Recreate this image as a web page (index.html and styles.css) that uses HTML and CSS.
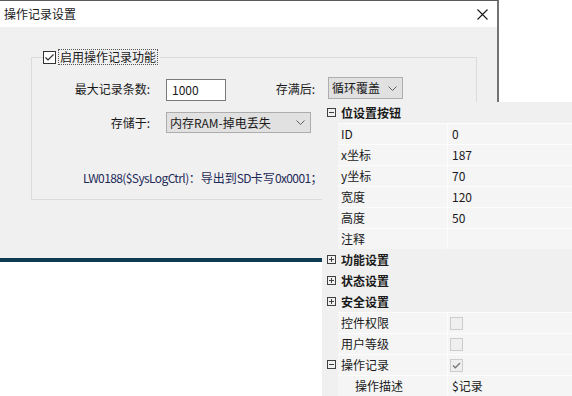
FILE: index.html
```html
<!DOCTYPE html>
<html lang="zh-CN">
<head>
    <meta charset="UTF-8">
    <title>操作记录设置</title>
    <link rel="stylesheet" href="styles.css">
</head>
<body>
<div id="screen">
    <div class="dialog">
        <div class="dialog-title">
            <span>操作记录设置</span>
            <svg class="close" width="11" height="11" viewBox="0 0 11 11"><path d="M0.5 0.5L10.5 10.5M10.5 0.5L0.5 10.5" stroke="#1a1a1a" stroke-width="1.1" fill="none"/></svg>
        </div>
        <div class="dialog-body">
            <div class="group">
                <div class="legend">
                    <span class="check"><svg width="11" height="11" viewBox="0 0 11 11"><path d="M1.5 5.5L4 8L9.5 2.5" stroke="#333" stroke-width="1.2" fill="none"/></svg></span>
                    <span class="legend-text">启用操作记录功能</span>
                </div>
                <div class="row row-top">
                    <span class="lbl">最大记录条数:</span>
                    <div class="input">1000</div>
                    <span class="lbl lbl-full">存满后:</span>
                    <div class="select sel-mode"><span>循环覆盖</span><svg class="chev" width="9" height="5" viewBox="0 0 9 5"><polyline points="0.5,0.5 4.5,4.5 8.5,0.5" stroke="#606060" fill="none"/></svg></div>
                </div>
                <div class="row row-store">
                    <span class="lbl">存储于:</span>
                    <div class="select sel-store"><span>内存RAM-掉电丢失</span><svg class="chev" width="9" height="5" viewBox="0 0 9 5"><polyline points="0.5,0.5 4.5,4.5 8.5,0.5" stroke="#606060" fill="none"/></svg></div>
                </div>
                <div class="info"><span class="addr">LW0188($SysLogCtrl)</span>：导出到<span class="addr">SD</span>卡写<span class="addr">0x0001</span>；</div>
            </div>
        </div>
    </div>
    <div class="strip"></div>

    <div class="props">
        <div class="cat"><span class="gut"><svg width="9" height="9" viewBox="0 0 9 9"><rect x="0.5" y="0.5" width="8" height="8" stroke="#404040" fill="none"/><path d="M2 4.5H7" stroke="#404040"/></svg></span><span class="cat-name">位设置按钮</span></div>
        <div class="prop"><span class="gut"></span><span class="name">ID</span><span class="val">0</span></div>
        <div class="prop"><span class="gut"></span><span class="name">x坐标</span><span class="val">187</span></div>
        <div class="prop"><span class="gut"></span><span class="name">y坐标</span><span class="val">70</span></div>
        <div class="prop"><span class="gut"></span><span class="name">宽度</span><span class="val">120</span></div>
        <div class="prop"><span class="gut"></span><span class="name">高度</span><span class="val">50</span></div>
        <div class="prop"><span class="gut"></span><span class="name">注释</span><span class="val"></span></div>
        <div class="cat"><span class="gut"><svg width="9" height="9" viewBox="0 0 9 9"><rect x="0.5" y="0.5" width="8" height="8" stroke="#404040" fill="none"/><path d="M2 4.5H7M4.5 2V7" stroke="#404040"/></svg></span><span class="cat-name">功能设置</span></div>
        <div class="cat"><span class="gut"><svg width="9" height="9" viewBox="0 0 9 9"><rect x="0.5" y="0.5" width="8" height="8" stroke="#404040" fill="none"/><path d="M2 4.5H7M4.5 2V7" stroke="#404040"/></svg></span><span class="cat-name">状态设置</span></div>
        <div class="cat"><span class="gut"><svg width="9" height="9" viewBox="0 0 9 9"><rect x="0.5" y="0.5" width="8" height="8" stroke="#404040" fill="none"/><path d="M2 4.5H7M4.5 2V7" stroke="#404040"/></svg></span><span class="cat-name">安全设置</span></div>
        <div class="prop"><span class="gut"></span><span class="name">控件权限</span><span class="val"><span class="box"></span></span></div>
        <div class="prop"><span class="gut"></span><span class="name">用户等级</span><span class="val"><span class="box"></span></span></div>
        <div class="prop"><span class="gut"><svg width="9" height="9" viewBox="0 0 9 9"><rect x="0.5" y="0.5" width="8" height="8" stroke="#404040" fill="none"/><path d="M2 4.5H7" stroke="#404040"/></svg></span><span class="name">操作记录</span><span class="val"><span class="box"><svg width="11" height="11" viewBox="0 0 11 11"><path d="M2 5.5L4.3 7.8L9 3" stroke="#777" stroke-width="1.3" fill="none"/></svg></span></span></div>
        <div class="prop"><span class="gut"></span><span class="name sub">操作描述</span><span class="val">$记录</span></div>
    </div>
</div>
</body>
</html>
```

FILE: styles.css
```css
*{
    margin: 0;
    padding: 0;
    box-sizing: border-box;
}
body{
    background: #ffffff;
    font-family: "Noto Sans CJK SC", "Liberation Sans", sans-serif;
    font-size: 12px;
    color: #1a1a1a;
}
#screen{
    position: relative;
    width: 572px;
    height: 396px;
    overflow: hidden;
}
.dialog{
    width: 499px;
    border-top: 1px solid #5a5a5a;
    border-right: 2px solid #737373;
    background: #f0f0f0;
}
.dialog-title{
    height: 26px;
    line-height: 26px;
    background: #ffffff;
    padding: 0 9px 0 4px;
    display: flex;
    justify-content: space-between;
    align-items: center;
}
.dialog-body{
    height: 231px;
    padding: 30px 20px 0 31px;
}
.group{
    height: 143px;
    border: 1px solid #dcdcdc;
}
.legend{
    display: flex;
    align-items: center;
    width: fit-content;
    height: 16px;
    margin: -9px 0 0 11px;
    background: #f0f0f0;
    padding-right: 2px;
}
.check{
    width: 13px;
    height: 13px;
    border: 1px solid #333333;
    background: #ffffff;
    display: flex;
    align-items: center;
    justify-content: center;
}
.legend-text{
    margin-left: 2px;
    padding: 0 1px;
    line-height: 14px;
    border: 1px dotted #555555;
}
.row{
    display: flex;
    align-items: flex-start;
}
.row-top{
    height: 24px;
    margin-top: 12px;
}
.row-store{
    height: 21px;
    margin-top: 11px;
}
.lbl{
    width: 118px;
    text-align: right;
    line-height: 24px;
    flex: none;
}
.row-store .lbl{
    line-height: 21px;
}
.lbl-full{
    width: 89px;
}
.input{
    width: 60px;
    height: 22px;
    margin: 2px 0 0 16px;
    border: 1px solid #7a7a7a;
    background: #ffffff;
    line-height: 20px;
    padding-left: 5px;
}
.select{
    height: 22px;
    border: 1px solid #adadad;
    background: #e1e1e1;
    line-height: 20px;
    padding: 0 5px 0 3px;
    display: flex;
    justify-content: space-between;
    align-items: center;
    white-space: nowrap;
    flex: none;
}
.sel-mode{
    width: 75px;
    margin-left: 13px;
}
.sel-store{
    width: 145px;
    height: 21px;
    margin-left: 16px;
    line-height: 19px;
}
.info{
    margin-top: 37px;
    padding-left: 51px;
    line-height: 16px;
    color: #1e2a58;
    white-space: nowrap;
}
.addr{
    letter-spacing: -0.6px;
}
.strip{
    width: 499px;
    height: 4px;
    background: #0c3b52;
}

.props{
    position: absolute;
    left: 322px;
    top: 102px;
    width: 250px;
    background: #f0f0f0;
}
.cat, .prop{
    display: flex;
    height: 21px;
}
.gut{
    width: 16px;
    flex: none;
    display: flex;
    align-items: center;
    padding-left: 5px;
}
.cat-name{
    flex: 1;
    font-weight: bold;
    line-height: 21px;
    padding-left: 3px;
}
.name{
    width: 110px;
    flex: none;
    background: #f5f5f5;
    border-top: 1px solid #fcfcfc;
    border-right: 1px solid #fcfcfc;
    line-height: 20px;
    padding-left: 3px;
}
.name.sub{
    padding-left: 17px;
}
.val{
    flex: 1;
    background: #f5f5f5;
    border-top: 1px solid #fcfcfc;
    line-height: 20px;
    padding-left: 4px;
    display: flex;
    align-items: center;
}
.box{
    width: 13px;
    height: 13px;
    margin-left: -2px;
    border: 1px solid #cccccc;
    background: #efefef;
    display: flex;
    align-items: center;
    justify-content: center;
}
```
